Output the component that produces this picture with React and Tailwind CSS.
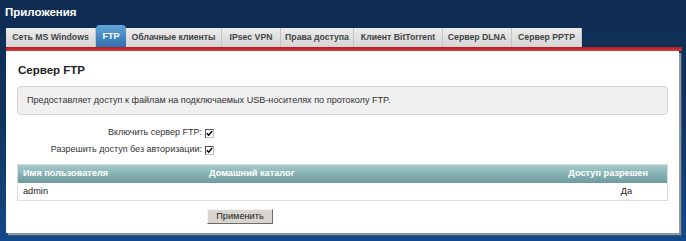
import React from "react";

const tabs = [
  { label: "Сеть MS Windows", w: "w-[90px]" },
  { label: "FTP", w: "w-[30px]", active: true },
  { label: "Облачные клиенты", w: "w-[96px]" },
  { label: "IPsec VPN", w: "w-[59px]" },
  { label: "Права доступа", w: "w-[73px]" },
  { label: "Клиент BitTorrent", w: "w-[89px]" },
  { label: "Сервер DLNA", w: "w-[69px]" },
  { label: "Сервер PPTP", w: "w-[70px]" },
];

function Check() {
  return (
    <span className="inline-flex w-[9px] h-[9px] bg-white border border-t-[#555] border-l-[#555] border-b-[#bbb] border-r-[#bbb] items-center justify-center">
      <svg width="7" height="7" viewBox="0 0 7 7">
        <path d="M0.8 3.2 L2.6 5.2 L6.2 1" stroke="#000" strokeWidth="1.4" fill="none" />
      </svg>
    </span>
  );
}

export default function App() {
  return (
    <div className="w-[686px] h-[241px] overflow-hidden bg-gradient-to-b from-[#0f2c52] via-[#10345f] to-[#13498a] font-['Liberation_Sans',Arial,sans-serif]">
      <div className="h-[25px] pl-[5px] pt-[5px] text-white font-bold text-[11.5px] leading-[14px]">
        Приложения
      </div>
      <div className="flex items-end h-[22px] ml-[6px]">
        {tabs.map((t) =>
          t.active ? (
            <div
              key={t.label}
              className={`${t.w} h-[22px] flex items-center justify-center rounded-t-[4px] bg-gradient-to-b from-[#62a6d6] to-[#2e6fae] text-white font-bold text-[9px] pt-[1px] whitespace-nowrap`}
            >
              {t.label}
            </div>
          ) : (
            <div
              key={t.label}
              className={`${t.w} h-[19px] flex items-center justify-center bg-gradient-to-b from-[#ececec] to-[#d4d4d4] border-r border-[#c4c4c4] text-[#444] font-bold text-[8.7px] whitespace-nowrap`}
            >
              {t.label}
            </div>
          )
        )}
      </div>
      <div className="ml-[6px] w-[676px] h-[4px] bg-gradient-to-b from-[#b01c20] to-[#d8383a]" />
      <div className="ml-[6px] w-[673px] h-[182px] bg-white shadow-[2px_2px_0_#8d97a3,3px_3px_0_#3a5575] px-[11px] pt-[12px]">
        <div className="text-[11.5px] font-bold text-[#222] leading-[15px] pl-[1px]">Сервер FTP</div>
        <div className="mt-[8px] w-[651px] h-[29px] bg-[#f0f0f0] border border-[#d3d3d3] rounded-[4px] flex items-center pl-[9px] text-[9.1px] text-[#333]">
          Предоставляет доступ к файлам на подключаемых USB-носителях по протоколу FTP.
        </div>
        <div className="mt-[10px] flex flex-col gap-[1px] text-[9px] text-[#333]">
          <div className="flex items-center h-[16px]">
            <span className="w-[188px] text-right pr-[3px]">Включить сервер FTP:</span>
            <Check />
          </div>
          <div className="flex items-center h-[16px]">
            <span className="w-[188px] text-right pr-[3px]">Разрешить доступ без авторизации:</span>
            <Check />
          </div>
        </div>
        <div className="mt-[6px] w-[651px] border border-[#dcdcdc] text-[9.2px]">
          <div className="h-[18px] flex items-center bg-gradient-to-b from-[#a4cacb] to-[#6c9b9e] text-white font-bold">
            <span className="w-[191px] pl-[5px]">Имя пользователя</span>
            <span className="flex-1">Домашний каталог</span>
            <span className="pr-[19px]">Доступ разрешен</span>
          </div>
          <div className="h-[17px] flex items-center text-[#222] bg-white">
            <span className="w-[191px] pl-[5px]">admin</span>
            <span className="flex-1" />
            <span className="pr-[35px]">Да</span>
          </div>
        </div>
        <div className="mt-[8px] pl-[190px]">
          <button className="w-[66px] h-[15px] bg-[#d8d5cf] border border-t-[#f4f4f4] border-l-[#f4f4f4] border-b-[#6b6b6b] border-r-[#6b6b6b] text-[9.2px] text-[#222] leading-[13px] flex items-center justify-center">
            Применить
          </button>
        </div>
      </div>
    </div>
  );
}
